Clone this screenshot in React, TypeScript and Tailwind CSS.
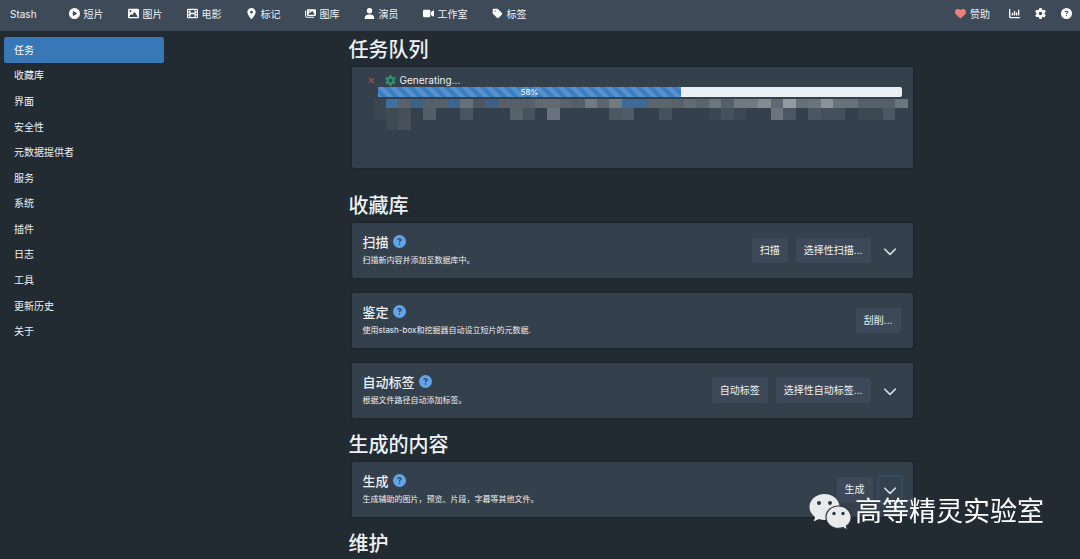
import type { IconType } from "react-icons"
import {
  FaChartColumn,
  FaChevronDown,
  FaCirclePlay,
  FaCircleQuestion,
  FaFilm,
  FaGear,
  FaHeart,
  FaImage,
  FaImages,
  FaLocationDot,
  FaTag,
  FaUser,
  FaVideo,
  FaXmark,
} from "react-icons/fa6"

const navItems: { label: string; icon: IconType }[] = [
  { label: "短片", icon: FaCirclePlay },
  { label: "图片", icon: FaImage },
  { label: "电影", icon: FaFilm },
  { label: "标记", icon: FaLocationDot },
  { label: "图库", icon: FaImages },
  { label: "演员", icon: FaUser },
  { label: "工作室", icon: FaVideo },
  { label: "标签", icon: FaTag },
]

const settingsTabs = [
  "任务",
  "收藏库",
  "界面",
  "安全性",
  "元数据提供者",
  "服务",
  "系统",
  "插件",
  "日志",
  "工具",
  "更新历史",
  "关于",
]

// redacted file path, one colour per block
const _ = ""
const mosaic = [
  [
    "#3a4650", "#3f6f9e", "#58626a", "#3b6287", "#566069", "#566069", "#3c6690", "#66717a", "#4b5660",
    "#3f5f82", "#55606a", "#56606a", "#56606a", "#616a71", "#616a71", "#596269", "#545e66", "#717a80",
    "#5c656d", "#717a80", "#3d6a96", "#3d6a96", "#5a656c", "#5a656c", "#56616a", "#606b72", "#59646c",
    "#6c767e", "#55606b", "#707a80", "#707a80", "#858c91", "#606973", "#939b9e", "#66707a", "#6a747a",
    "#8b9398", "#66717a", "#66717a", "#55606b", "#55606b", "#55606b", "#6a757c",
  ],
  [
    "#3a4650", "#3f4b54", "#444f58", _, "#525d66", _, _, "#48545e", _,
    _, _, "#56616a", "#46525c", _, "#6a737d", _, _, _,
    _, "#4b5761", "#4f5b65", _, _, "#45515b", _, _, _,
    "#3a4751", "#44505b", "#3b4853", _, _, "#6c757e", "#4b5862", _, "#4a5660",
    "#44505b", "#44505b", _, "#3c4852", "#3c4852", "#4b5863", _,
  ],
  [_, "#3e4a53", "#46515b"],
]

type Task = {
  title: string
  description: string
  actions: string[]
  expandable?: boolean
  focused?: boolean
}

const libraryTasks: Task[] = [
  {
    title: "扫描",
    description: "扫描新内容并添加至数据库中。",
    actions: ["扫描", "选择性扫描..."],
    expandable: true,
  },
  {
    title: "鉴定",
    description: "使用stash-box和挖掘器自动设立短片的元数据.",
    actions: ["刮削..."],
  },
  {
    title: "自动标签",
    description: "根据文件路径自动添加标签。",
    actions: ["自动标签", "选择性自动标签..."],
    expandable: true,
  },
]

const generateTask: Task = {
  title: "生成",
  description: "生成辅助的图片，预览、片段，字幕等其他文件。",
  actions: ["生成"],
  expandable: true,
  focused: true,
}

const Navbar = () => (
  <header className="flex h-[31px] items-center justify-between bg-[#3f4a59] pb-1 pl-[10px] pr-2">
    <nav className="flex items-center">
      <a href="#home" className="mr-8">
        Stash
      </a>
      <ul className="flex items-center gap-6">
        {navItems.map(({ label, icon: Icon }) => (
          <li key={label}>
            <a href={`#${label}`} className="flex items-center gap-1">
              <Icon className="h-[11px] w-auto text-white" />
              {label}
            </a>
          </li>
        ))}
      </ul>
    </nav>
    <div className="flex items-center gap-[15px]">
      <a href="#donate" className="mr-1 flex items-center gap-1">
        <FaHeart className="h-[11px] w-auto text-[#ec7f79]" />
        赞助
      </a>
      <a href="#stats" aria-label="统计">
        <FaChartColumn className="size-[11px] text-white" />
      </a>
      <a href="#settings" aria-label="设置">
        <FaGear className="size-[11px] text-white" />
      </a>
      <button type="button" aria-label="帮助">
        <FaCircleQuestion className="size-[11px] text-white" />
      </button>
    </div>
  </header>
)

const Sidebar = () => (
  <aside className="w-[184px] shrink-0 pl-1 pr-5 pt-[6px]">
    <ul className="grid h-[307px] auto-rows-fr">
      {settingsTabs.map((tab, index) => (
        <li key={tab}>
          <a
            href={`#${tab}`}
            className={`flex h-full items-center rounded-xs px-[10px] ${index === 0 ? "bg-[#3978b7] text-white" : ""}`}
          >
            {tab}
          </a>
        </li>
      ))}
    </ul>
  </aside>
)

const Heading = ({ children }: { children: string }) => (
  <h1 className="mb-[5px] pl-px text-[20px] font-medium leading-6">{children}</h1>
)

const JobQueue = () => (
  <div className="mx-1 mb-[26px] h-[101px] rounded-xs bg-[#34404b] pl-[15px] pr-[5px] pt-[7px] shadow-[0_0_2px_#131a20]">
    <div className="flex items-center text-[10px] leading-3">
      <button type="button" aria-label="停止" className="mr-[9px]">
        <FaXmark className="size-[9px] text-[#b04a3e]" />
      </button>
      <FaGear className="mr-1 size-[11px] text-[#2f8f63]" />
      Generating...
    </div>
    <div className="ml-[11px] mr-[6px] mt-px h-[10px] overflow-hidden rounded-xs bg-[#ebeef3]">
      <div
        className="h-full bg-[#3a7fc4] bg-[linear-gradient(45deg,rgba(255,255,255,.15)_25%,transparent_25%,transparent_50%,rgba(255,255,255,.15)_50%,rgba(255,255,255,.15)_75%,transparent_75%)] bg-[length:12px_12px] text-center text-[8px] leading-[10px] text-white"
        style={{ width: "58%" }}
      >
        58%
      </div>
    </div>
    <div className="ml-[7px] mt-[2px] grid grid-cols-[repeat(43,1fr)] grid-rows-[9px_12px_10px]">
      {mosaic.map((row, y) =>
        row.map((color, x) => <div key={`${y}-${x}`} style={{ backgroundColor: color || undefined }} />),
      )}
    </div>
  </div>
)

const TaskCard = ({ task }: { task: Task }) => (
  <div className="mx-1 mb-[15px] flex h-[55px] items-center justify-between rounded-xs bg-[#34404b] pl-[11px] pr-3 shadow-[0_0_2px_#131a20]">
    <div className="pb-[2px]">
      <h3 className="flex items-center gap-1 text-[13px] font-medium leading-5">
        {task.title}
        <button type="button" aria-label="帮助">
          <FaCircleQuestion className="size-[13px] text-[#62a5ea]" />
        </button>
      </h3>
      <p className="text-[8px] leading-4">{task.description}</p>
    </div>
    <div className={`flex ${task.focused ? "gap-[6px]" : "gap-2"}`}>
      {task.actions.map((action) => (
        <button key={action} type="button" className="h-[25px] rounded-xs bg-[#3d4958] px-2 pb-px">
          {action}
        </button>
      ))}
      {task.expandable && (
        <button
          type="button"
          aria-label="展开"
          className={`flex h-[25px] w-[22px] items-center justify-center rounded-xs ${
            task.focused ? "ring-2 ring-[#314b63]" : ""
          }`}
        >
          <FaChevronDown className="size-[14px] text-[#d5dbe1]" />
        </button>
      )}
    </div>
  </div>
)

const Watermark = () => (
  <div className="fixed bottom-7 right-9 flex items-start gap-1 text-[27px] leading-[38px] text-white">
    <svg viewBox="0 0 42 37" className="h-[37px] w-[42px]" aria-hidden="true">
      <path
        fill="#e8eaec"
        d="M15.500 1C7.200 1 .5 6.800.5 14c0 4.100 2.200 7.700 5.600 10.100L4.700 28.600l5.200-2.700c1.800.6 3.700 1 5.600 1 C24 27 30.500 21.200 30.500 14S23.800 1 15.500 1z"
      />
      <circle cx="10" cy="10" r="2" fill="#2b3640" />
      <circle cx="21" cy="10" r="2" fill="#2b3640" />
      <path
        fill="#e8eaec"
        stroke="#2b3640"
        strokeWidth="1.200"
        d="M29.500 13C22.500 13 17 18 17 24.200s5.500 11.200 12.500 11.200c1.600 0 3.100-.3 4.500-.7l4.600 2.300-1.200-3.900c2.900-2.100 4.800-5.300 4.800-8.900C42 18 36.500 13 29.500 13z"
      />
      <circle cx="25" cy="20.500" r="1.700" fill="#2b3640" />
      <circle cx="34" cy="20.500" r="1.700" fill="#2b3640" />
    </svg>
    <span>高等精灵实验室</span>
  </div>
)

const App = () => {
  return (
    <div className="min-h-screen bg-[#222a32] font-['Inter','Noto_Sans_CJK_SC',sans-serif] text-[10px] leading-4 text-[#eef2f5]">
      <Navbar />
      <div className="flex">
        <Sidebar />
        <main className="min-w-0 flex-1 pt-[7px]">
          <div className="mx-auto max-w-[569px]">
            <Heading>任务队列</Heading>
            <JobQueue />
            <Heading>收藏库</Heading>
            {libraryTasks.map((task) => (
              <TaskCard key={task.title} task={task} />
            ))}
            <Heading>生成的内容</Heading>
            <TaskCard task={generateTask} />
            <Heading>维护</Heading>
          </div>
        </main>
      </div>
      <Watermark />
    </div>
  )
}

export default App
